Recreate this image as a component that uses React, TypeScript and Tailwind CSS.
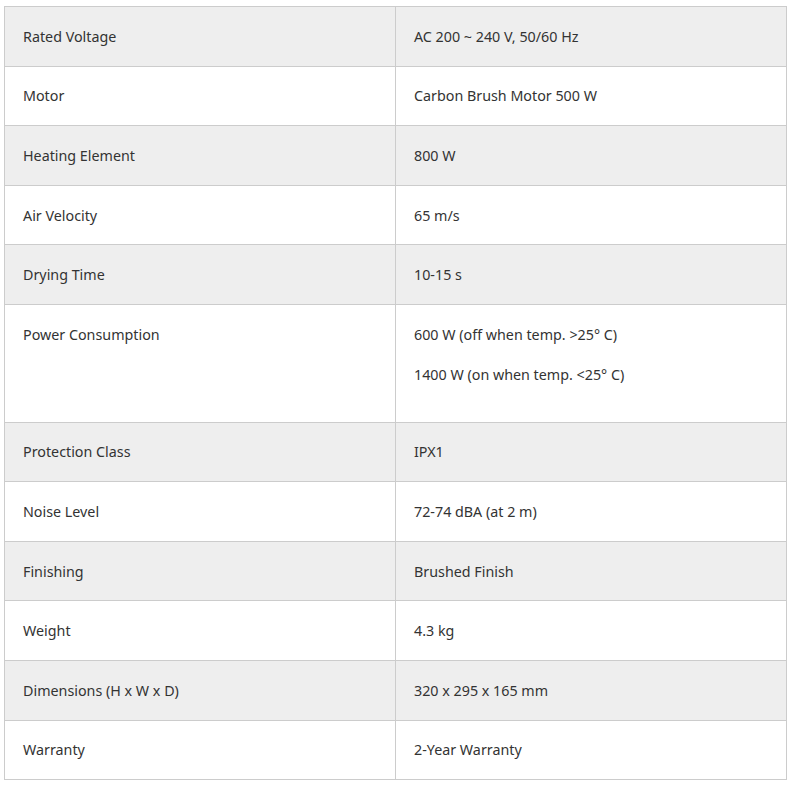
import React from "react";

const rows: [string, string[]][] = [
  ["Rated Voltage", ["AC 200 ~ 240 V, 50/60 Hz"]],
  ["Motor", ["Carbon Brush Motor 500 W"]],
  ["Heating Element", ["800 W"]],
  ["Air Velocity", ["65 m/s"]],
  ["Drying Time", ["10-15 s"]],
  ["Power Consumption", ["600 W (off when temp. >25° C)", "1400 W (on when temp. <25° C)"]],
  ["Protection Class", ["IPX1"]],
  ["Noise Level", ["72-74 dBA (at 2 m)"]],
  ["Finishing", ["Brushed Finish"]],
  ["Weight", ["4.3 kg"]],
  ["Dimensions (H x W x D)", ["320 x 295 x 165 mm"]],
  ["Warranty", ["2-Year Warranty"]],
];

export default function App() {
  return (
    <div className="bg-white w-[789px] h-[786px] pt-[6px] pl-[4px]" style={{ fontFamily: '"Noto Sans", "Open Sans", sans-serif' }}>
      <table className="w-[783px] border-collapse text-[14.3px] leading-[20px] text-[#333333]">
        <tbody>
          {rows.map(([k, vals], i) => (
            <tr key={k} className={i % 2 === 0 ? "bg-[#eeeeee]" : "bg-white"}>
              <td className="w-[391px] border border-[#cccccc] px-[18px] pt-[19.8px] pb-[18.8px] align-top">{k}</td>
              <td className="border border-[#cccccc] px-[18px] pt-[19.8px] pb-[18.8px] align-top">
                {vals.map((v, j) => (
                  <p key={j} className={j > 0 ? "mt-[20px]" : ""}>{v}</p>
                ))}
                {vals.length > 1 && <div className="h-[18px]" />}
              </td>
            </tr>
          ))}
        </tbody>
      </table>
    </div>
  );
}
